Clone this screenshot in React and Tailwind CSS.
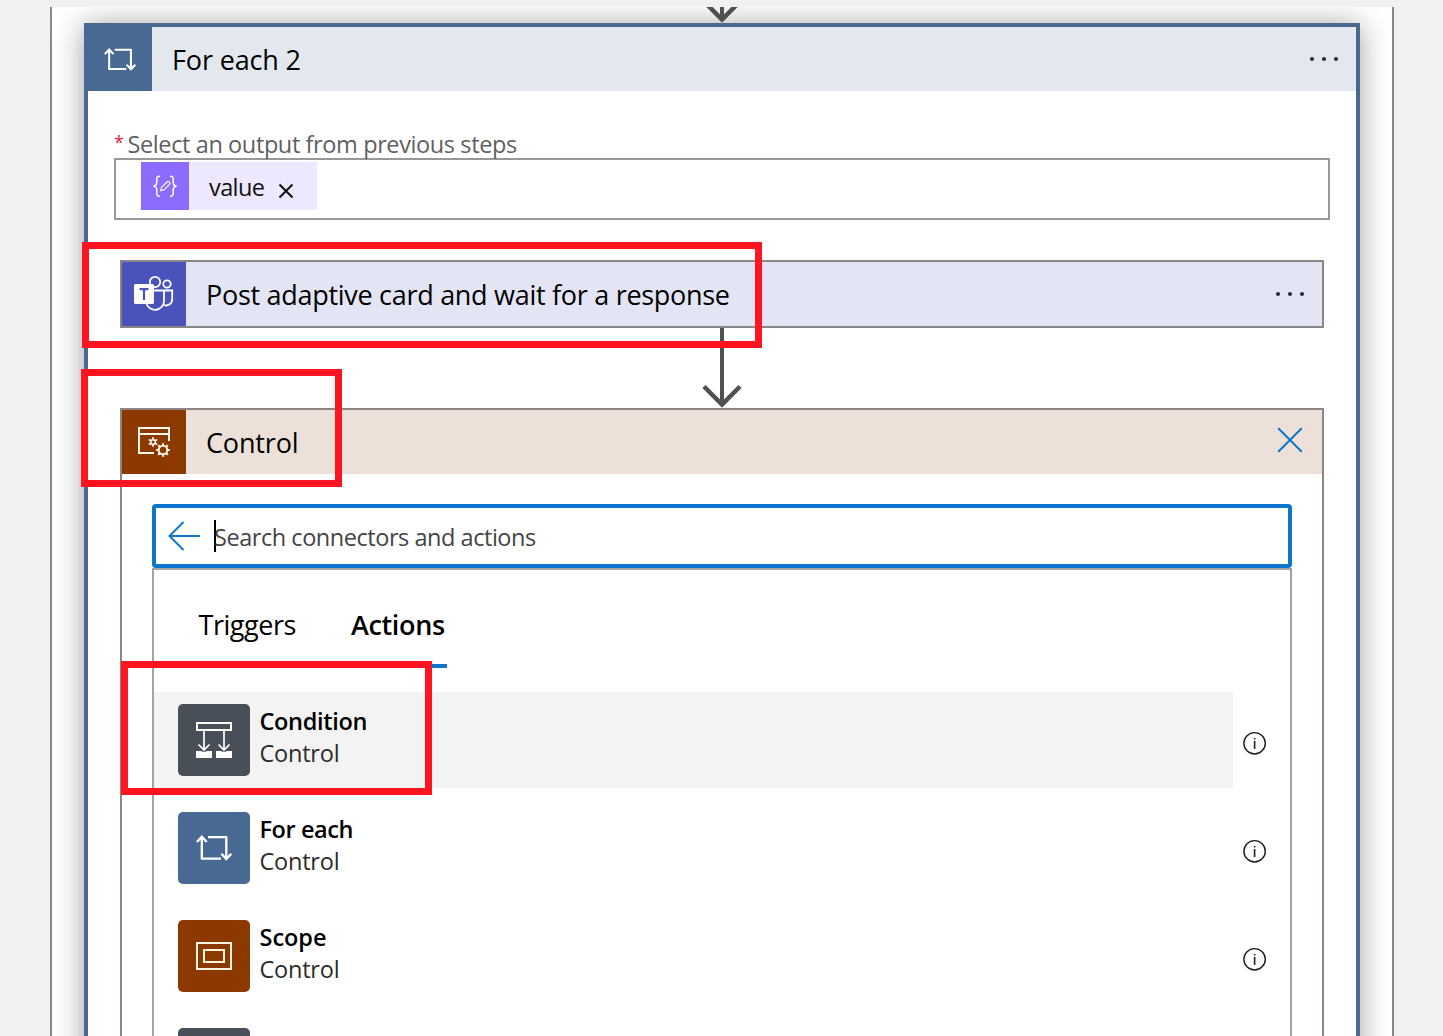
import React from "react";

const FONT = "font-['Open_Sans','Noto_Sans',sans-serif]";

function LoopIcon({ className }) {
  return (
    <svg viewBox="0 0 36 28" className={className} fill="none" stroke="#fff" strokeWidth="2.3">
      <path d="M5.8 25.2V4M0.9 8 5.8 2.8 10.7 8M5 24.6H25" />
      <path d="M12 3.1H31M30.3 2.2V24M25.4 19.8 30.3 25 35.2 19.8" />
    </svg>
  );
}

function ConditionIcon() {
  return (
    <svg viewBox="0 0 72 72" className="size-[72px]" fill="none" stroke="#fff">
      <rect x="19" y="19" width="34" height="7" strokeWidth="2" />
      <path d="M26 27V46M46 27V46" strokeWidth="1.7" />
      <path d="M20.5 40.5 26 46 31.5 40.5M40.5 40.5 46 46 51.5 40.5" strokeWidth="1.7" />
      <path d="M18 47H23L24.5 47.8H27.5L29 47H34V54H18ZM38 47H43L44.5 47.8H47.5L49 47H54V54H38Z" fill="#fff" stroke="none" />
    </svg>
  );
}

function ScopeIcon() {
  return (
    <svg viewBox="0 0 72 72" className="size-[72px]" fill="none" stroke="#fff3e2" strokeWidth="2">
      <rect x="19" y="23" width="34" height="26" />
      <rect x="26" y="30" width="20" height="12" />
    </svg>
  );
}

function TeamsIcon() {
  return (
    <svg viewBox="0 0 64 64" className="size-16" fill="none" stroke="#fff" strokeWidth="1.8">
      <circle cx="33" cy="20" r="5.2" />
      <circle cx="45" cy="22" r="3.7" />
      <path d="M32 28.5H42V39.5A9 9 0 0 1 24.6 42" />
      <path d="M42 28.5H50.2V37A6.3 6.3 0 0 1 42 43.2" />
      <rect x="12" y="22" width="20" height="20" rx="1.6" fill="#fff" stroke="none" />
      <path d="M17.6 27.2H26.4M22 27V38" stroke="#4a53bb" strokeWidth="2.2" />
    </svg>
  );
}

function ControlIcon() {
  return (
    <svg viewBox="0 0 64 64" className="size-16" fill="none" stroke="#fff6ea" strokeWidth="2">
      <path d="M47 31V18H17V43H32M17 24H47" />
      <circle cx="31" cy="32" r="2.3" strokeWidth="1.6" />
      <path
        d="M31 27.2V29.4M31 34.6V36.8M26.8 29.6 28.8 30.7M33.2 33.3 35.2 34.4M26.8 34.4 28.8 33.3M33.2 30.7 35.2 29.6"
        strokeWidth="1.7"
      />
      <circle cx="41" cy="40" r="4.3" strokeWidth="2" />
      <path
        d="M41 33.2V35.4M41 44.6V46.8M34.2 40H36.4M45.6 40H47.8M36.2 35.2 37.8 36.8M44.2 43.2 45.8 44.8M36.2 44.8 37.8 43.2M44.2 36.8 45.8 35.2"
        strokeWidth="2"
      />
    </svg>
  );
}

function ExpressionIcon() {
  return (
    <svg viewBox="0 0 48 48" className="size-12" fill="none" stroke="#fff" strokeWidth="1.5">
      <path d="M19 14.2C15.6 14.2 15.8 15.6 15.8 18V20.6C15.8 22.8 14.6 24 12.4 24.2 14.6 24.4 15.8 25.6 15.8 27.8V30.4C15.8 32.8 15.6 34.2 19 34.2" />
      <path d="M29 14.2C32.4 14.2 32.2 15.6 32.2 18V20.6C32.2 22.8 33.4 24 35.6 24.2 33.4 24.4 32.2 25.6 32.2 27.8V30.4C32.2 32.8 32.4 34.2 29 34.2" />
      <path d="M19.6 28.8 20.6 25.4 26 20A1.7 1.7 0 0 1 28.5 22.4L23 27.8Z" strokeWidth="1.1" />
    </svg>
  );
}

function Dots() {
  return (
    <svg viewBox="0 0 32 8" className="h-2 w-8" fill="#2b2f36">
      <circle cx="4" cy="4" r="2.1" />
      <circle cx="16" cy="4" r="2.1" />
      <circle cx="28" cy="4" r="2.1" />
    </svg>
  );
}

function InfoIcon() {
  return (
    <svg viewBox="0 0 24 24" className="size-6" fill="none" stroke="#1f1f1f">
      <circle cx="11.6" cy="12.3" r="10.7" strokeWidth="1.4" />
      <path d="M11.6 10.1V17.9M11.6 7.1V8.6" strokeWidth="1.6" />
    </svg>
  );
}

function Arrow({ className }) {
  return (
    <svg viewBox="0 0 40 80" className={className} fill="none" stroke="#505050">
      <path d="M20 0V77" strokeWidth="4" />
      <path d="M2 58.5 20 76.5 38 58.5" strokeWidth="4.5" />
    </svg>
  );
}

const actions = [
  { title: "Condition", track: "tracking-[-0.32px]", tile: "bg-[#484f58]", row: "bg-[#f3f3f3]", icon: <ConditionIcon /> },
  { title: "For each", track: "tracking-[-0.42px]", tile: "bg-[#486991]", row: "", icon: <LoopIcon className="h-7 w-9" /> },
  { title: "Scope", track: "tracking-[-0.02px]", tile: "bg-[#8c3900]", row: "", icon: <ScopeIcon /> },
];

function ActionRow({ title, track, tile, row, icon }) {
  return (
    <div className="mb-3 flex h-24 items-center">
      <div className={"flex h-24 w-[1079px] pt-3 pl-6 " + row}>
        <div className={"flex size-[72px] items-center justify-center rounded-[5px] " + tile}>{icon}</div>
        <div className="ml-[9.5px] pt-px text-[23.5px] leading-8">
          <div className={"font-semibold text-black " + track}>{title}</div>
          <div className="tracking-[-0.22px] text-[#2b2b2b]">Control</div>
        </div>
      </div>
      <div className="mt-[6px] ml-[10px]">
        <InfoIcon />
      </div>
    </div>
  );
}

function Highlight({ className }) {
  return <div className={"pointer-events-none absolute border-7 border-[#ff1522] " + className} />;
}

export default function App() {
  return (
    <div className={"relative h-[1036px] w-[1443px] overflow-hidden bg-[#f1f1f1] pt-[7px] " + FONT}>
      <div className="ml-[50px] h-[1029px] w-[1344px] overflow-hidden border-x-2 border-[#8d8684] bg-white">
        <div className="relative z-10 flex h-4 items-end justify-center overflow-hidden">
          <Arrow className="h-20 w-10 shrink-0" />
        </div>
        <div className="ml-8 h-[1100px] w-[1276px] border-4 border-[#486991] bg-white shadow-[0_2px_28px_rgba(0,0,0,0.38)]">
          <div className="flex h-16 items-center bg-[#e3e8ef]">
            <div className="flex size-16 items-center justify-center bg-[#486991]">
              <LoopIcon className="h-[25px] w-8" />
            </div>
            <div className="mt-0.5 ml-5 flex-1 text-[27px] tracking-[-0.15px] text-black">For each 2</div>
            <div className="mr-4">
              <Dots />
            </div>
          </div>

          <div className="mt-[39px] ml-[26px] flex h-7 text-[23.5px] leading-7 text-[#5f5f5f]">
            <span className="w-[13.5px] text-[18px] leading-[25px] text-[#e0203a]">*</span>
            <span className="tracking-[-0.39px]">Select an output from previous steps</span>
          </div>
          <div className="ml-[26px] h-[62px] w-[1216px] border-2 border-[#989898] pt-0.5 pl-[25px]">
            <div className="flex h-12 w-44 items-center bg-[#eee8ff]">
              <div className="size-12 bg-[#8c6bff]">
                <ExpressionIcon />
              </div>
              <span className="mt-1 ml-5 text-[23.5px] tracking-[-0.6px] text-[#111]">value</span>
              <svg viewBox="0 0 16 16" className="mt-2.5 ml-[13.5px] size-4" stroke="#111" strokeWidth="2">
                <path d="M1.5 1.5 14.5 14.5M14.5 1.5 1.5 14.5" />
              </svg>
            </div>
          </div>

          <div className="mt-10 ml-8 flex h-[68px] w-[1204px] items-center border-2 border-[#8a8688] bg-[#e3e5f4]">
            <div className="size-16 bg-[#4a53bb]">
              <TeamsIcon />
            </div>
            <div className="mt-0.5 ml-5 flex-1 text-[27px] tracking-[-0.29px] text-black">
              Post adaptive card and wait for a response
            </div>
            <div className="mr-4">
              <Dots />
            </div>
          </div>
          <div className="flex h-20 justify-center">
            <Arrow className="h-20 w-10" />
          </div>

          <div className="ml-8 h-[700px] w-[1204px] border-2 border-[#8d8684] bg-white">
            <div className="flex h-16 items-center bg-[#ede0d9]">
              <div className="size-16 bg-[#8c3900]">
                <ControlIcon />
              </div>
              <div className="mt-0.5 ml-5 flex-1 text-[27px] tracking-[-0.15px] text-black">Control</div>
              <svg viewBox="0 0 26 26" className="mr-[19px] mb-1 size-[26px]" stroke="#1076c8" strokeWidth="2">
                <path d="M1.3 1.3 24.7 24.7M24.7 1.3 1.3 24.7" />
              </svg>
            </div>
            <div className="mx-[30px] mt-[30px] flex h-16 items-center rounded-[4px] border-4 border-[#0b76cb]">
              <svg viewBox="0 0 32 30" className="ml-3 size-8" fill="none" stroke="#1076c8" strokeWidth="2">
                <path d="M1.5 15H32M15.5 1 1.5 15 15.5 29" />
              </svg>
              <div className="ml-3.5 h-8 w-0.5 bg-black" />
              <div className="mt-1 -ml-0.5 text-[23.5px] tracking-[-0.455px] text-[#444]">
                Search connectors and actions
              </div>
            </div>
            <div className="mx-[30px] h-[560px] border-2 border-[#a3a3a3]">
              <div className="flex h-[98px] pl-[44.5px] text-[27px] text-black">
                <div className="mt-9 h-[37px] leading-[37px] tracking-[-0.46px]">Triggers</div>
                <div className="ml-[51px] h-[98px] w-[100px] border-b-4 border-[#0b76cb] pt-9 pl-1 leading-[37px] font-semibold tracking-[-0.35px]">
                  Actions
                </div>
              </div>
              <div className="pt-6">
                {actions.map((a) => (
                  <ActionRow key={a.title} {...a} />
                ))}
                <div className="mt-6 ml-6 size-[72px] rounded-[5px] bg-[#484f58]" />
              </div>
            </div>
          </div>
        </div>
      </div>

      <Highlight className="top-[242px] left-[82px] z-20 h-[106px] w-[680px]" />
      <Highlight className="top-[369px] left-[81px] z-20 h-[118px] w-[261px]" />
      <Highlight className="top-[661px] left-[121px] z-20 h-[134px] w-[311px]" />
    </div>
  );
}
